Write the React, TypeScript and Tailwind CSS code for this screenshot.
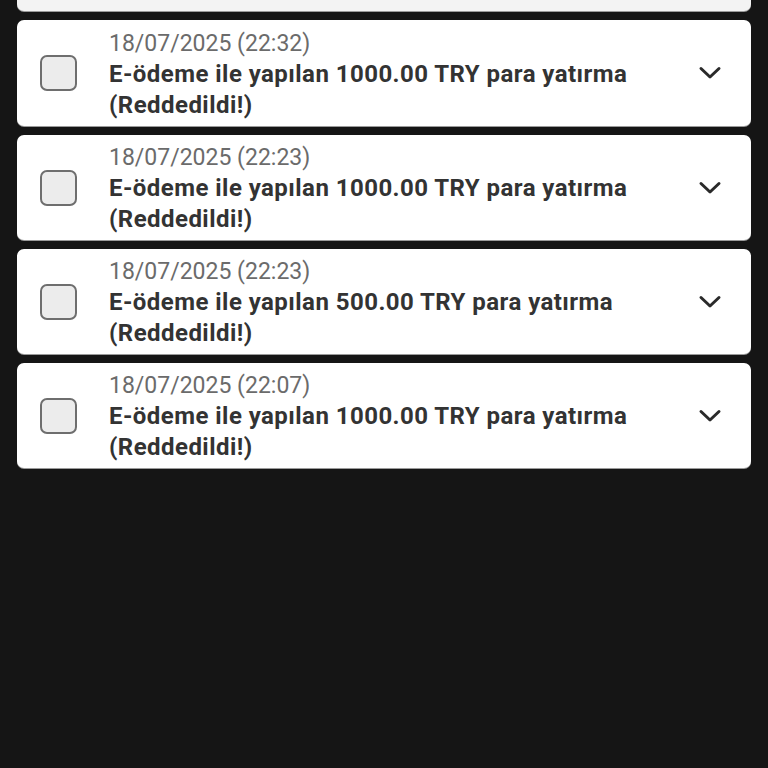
const ITEMS = [
  { date: "18/07/2025 (22:32)", amount: "1000.00" },
  { date: "18/07/2025 (22:23)", amount: "1000.00" },
  { date: "18/07/2025 (22:23)", amount: "500.00" },
  { date: "18/07/2025 (22:07)", amount: "1000.00" },
];

function Chevron() {
  return (
    <svg width="24" height="16" viewBox="0 0 24 16" fill="none" className="text-[#2a2a2a]">
      <path d="M3 3.5 L12 12 L21 3.5" stroke="currentColor" strokeWidth="3" strokeLinecap="round" strokeLinejoin="round" />
    </svg>
  );
}

function TransactionRow({ date, amount, first }: { date: string; amount: string; first?: boolean }) {
  return (
    <div
      className={`flex ${first ? "h-[106px]" : "h-[105px]"} items-center rounded-[7px] bg-white pl-[23px] pr-[29px] shadow-[0_1px_0_#9a9a9a]`}
    >
      <div className="h-[36px] w-[37px] shrink-0 rounded-[7px] border-2 border-[#6e6e6e] bg-[#ececec]" />
      <div className="ml-[32px] flex-1 pt-[2px] leading-[31px]">
        <div className="text-[23px] text-[#6b6b6b]">{date}</div>
        <div className="text-[24px] font-bold tracking-[0.45px] text-[#333333]">
          E-ödeme ile yapılan {amount} TRY para yatırma
          <br />
          (Reddedildi!)
        </div>
      </div>
      <Chevron />
    </div>
  );
}

export default function App() {
  return (
    <div className="h-[768px] w-[768px] overflow-hidden bg-[#151515] px-[17px] font-['Roboto',sans-serif]">
      <div className="-mt-[94px] flex flex-col gap-[9px]">
        <div className="h-[105px] rounded-[7px] bg-[#f3f3f3] shadow-[0_1px_0_#9a9a9a]" />
        {ITEMS.map((item, i) => (
          <TransactionRow key={i} first={i === 0} date={item.date} amount={item.amount} />
        ))}
      </div>
    </div>
  );
}
